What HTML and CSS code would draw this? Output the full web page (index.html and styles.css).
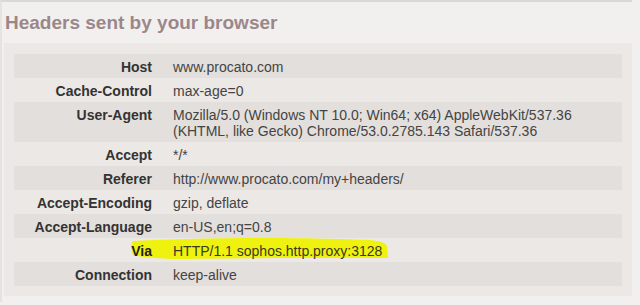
FILE: index.html
```html
<!DOCTYPE html>
<html lang="en">
<head>
<meta charset="utf-8">
<title>Headers sent by your browser</title>
<link rel="stylesheet" href="styles.css">
</head>
<body>
<div class="page">
  <h1 class="title">Headers sent by your browser</h1>
  <div class="panel">
    <div class="headers">
      <div class="row stripe"><div class="name">Host</div><div class="value">www.procato.com</div></div>
      <div class="row"><div class="name">Cache-Control</div><div class="value">max-age=0</div></div>
      <div class="row stripe"><div class="name">User-Agent</div><div class="value">Mozilla/5.0 (Windows NT 10.0; Win64; x64) AppleWebKit/537.36 (KHTML, like Gecko) Chrome/53.0.2785.143 Safari/537.36</div></div>
      <div class="row"><div class="name">Accept</div><div class="value">*/*</div></div>
      <div class="row stripe"><div class="name">Referer</div><div class="value">http://www.procato.com/my+headers/</div></div>
      <div class="row"><div class="name">Accept-Encoding</div><div class="value">gzip, deflate</div></div>
      <div class="row stripe"><div class="name">Accept-Language</div><div class="value">en-US,en;q=0.8</div></div>
      <div class="row marked">
        <svg class="marker" width="380" height="24" viewBox="0 0 380 24" aria-hidden="true">
          <path d="M119 3 C160 1 210 0 246 0 C290 0 330 1 356 2 C366 3 372 5 373 8 L374 20 C340 20 300 20 286 20 C240 20 190 21 156 21 C140 20 125 19 119 17 C117 12 117 6 119 3 Z" fill="#eef20e"/>
        </svg>
        <div class="name">Via</div><div class="value">HTTP/1.1 sophos.http.proxy:3128</div>
      </div>
      <div class="row stripe"><div class="name">Connection</div><div class="value">keep-alive</div></div>
    </div>
  </div>
</div>
</body>
</html>
```

FILE: styles.css
```css
html, body {
  margin: 0;
  padding: 0;
  background: #f1f0ef;
}

body {
  font-family: "Liberation Sans", Arial, sans-serif;
  font-size: 14px;
  color: #444;
}

.page {
  width: 630px;
  border-top: 2px solid #d9d8d8;
  border-left: 2px solid #e4e3e2;
  padding-bottom: 6px;
}

.title {
  margin: 9px 0 8px 3px;
  font-size: 19px;
  line-height: 24px;
  font-weight: bold;
  color: #9b878a;
}

.panel {
  margin-left: 2px;
  width: 608px;
  padding: 11px 10px 10px;
  background: #ece8e6;
}

.headers {
  display: flex;
  flex-direction: column;
}

.row {
  display: flex;
  position: relative;
  line-height: 16px;
}

.row.stripe {
  background: #e3dfdc;
}

.name {
  position: relative;
  flex: 0 0 138px;
  padding: 5px 10px 3px 0;
  text-align: right;
  font-weight: bold;
  color: #333;
}

.value {
  position: relative;
  flex: 1;
  padding: 5px 12px 3px 11px;
  color: #444;
}

.marked .name {
  color: #222;
}

.marked .value {
  color: #3a3a20;
}

.marker {
  position: absolute;
  left: 0;
  top: 0;
}
```
